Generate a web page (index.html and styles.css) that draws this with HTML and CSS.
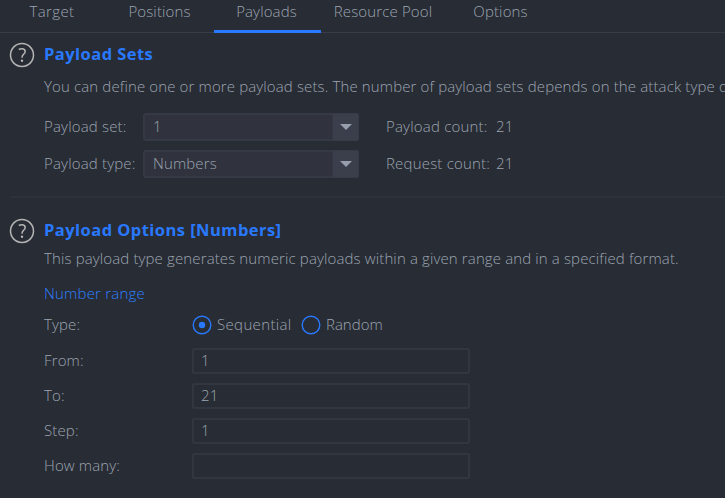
FILE: index.html
```html
<!DOCTYPE html>
<html lang="en">
<head>
<meta charset="utf-8">
<title>Intruder</title>
<link rel="stylesheet" href="styles.css">
</head>
<body>
<nav class="tabs">
  <span class="tab loose">Target</span>
  <span class="tab">Positions</span>
  <span class="tab active">Payloads</span>
  <span class="tab wide">Resource Pool</span>
  <span class="tab last">Options</span>
</nav>
<section class="panel sets">
  <svg class="help" viewBox="0 0 26 26"><circle cx="13" cy="13" r="11.5"/><path d="M9.8 7.5Q11.2 6.7 12.8 6.7Q16.2 6.7 16.2 9.5Q16.2 11.1 14.5 12.4Q13 13.6 13 15.7"/><circle class="dot" cx="13" cy="18.7" r="1.2"/></svg>
  <div class="body">
    <h2>Payload Sets</h2>
    <p class="desc">You can define one or more payload sets. The number of payload sets depends on the attack type defined in the Positions tab.</p>
    <div class="set-grid">
      <label>Payload set:</label>
      <div class="select"><span class="value">1</span><span class="arrow"><svg viewBox="0 0 12 6"><path d="M0 0H12L6 6Z"/></svg></span></div>
      <span class="count">Payload count:</span><span>21</span>
      <label>Payload type:</label>
      <div class="select"><span class="value">Numbers</span><span class="arrow"><svg viewBox="0 0 12 6"><path d="M0 0H12L6 6Z"/></svg></span></div>
      <span class="count">Request count:</span><span>21</span>
    </div>
  </div>
</section>
<hr>
<section class="panel options">
  <svg class="help" viewBox="0 0 26 26"><circle cx="13" cy="13" r="11.5"/><path d="M9.8 7.5Q11.2 6.7 12.8 6.7Q16.2 6.7 16.2 9.5Q16.2 11.1 14.5 12.4Q13 13.6 13 15.7"/><circle class="dot" cx="13" cy="18.7" r="1.2"/></svg>
  <div class="body">
    <h2>Payload Options [Numbers]</h2>
    <p class="desc">This payload type generates numeric payloads within a given range and in a specified format.</p>
    <h3>Number range</h3>
    <div class="row type"><label>Type:</label>
      <svg class="radio" viewBox="0 0 20 20"><circle cx="10" cy="10" r="8.8"/><circle class="dot" cx="10" cy="10" r="3.2"/></svg><span class="seq">Sequential</span>
      <svg class="radio" viewBox="0 0 20 20"><circle cx="10" cy="10" r="8.8"/></svg><span class="rand">Random</span>
    </div>
    <div class="row"><label>From:</label><div class="input">1</div></div>
    <div class="row"><label>To:</label><div class="input">21</div></div>
    <div class="row"><label>Step:</label><div class="input">1</div></div>
    <div class="row"><label>How many:</label><div class="input"></div></div>
  </div>
</section>
</body>
</html>
```
FILE: styles.css
```css
* { box-sizing: border-box; }
body {
  margin: 0;
  height: 498px;
  overflow: hidden;
  background: #282c34;
  color: #9ca4b2;
  font: 300 15px/20px "Open Sans", "Noto Sans", sans-serif;
  letter-spacing: 0.13px;
  white-space: nowrap;
}
h2, h3, p { margin: 0; font-size: 15px; line-height: 20px; }
h2 { font-size: 16.5px; font-weight: 700; color: #2979ff; letter-spacing: 0.45px; }
h3 { font-weight: 300; color: #2e80ff; letter-spacing: 0.2px; }
.tabs { display: flex; height: 33px; border-bottom: 1px solid #383c48; }
.tab { flex: none; width: 107px; height: 33px; padding: 1px 2px 0 0; text-align: center; border-bottom: 3px solid transparent; }
.tab.loose { padding-right: 3px; letter-spacing: 0.4px; }
.tab.wide { width: 125px; padding-right: 1px; }
.tab.last { padding: 1px 0 0 2px; }
.tab.active { border-color: #2979ff; }
.panel { display: flex; padding-left: 9px; }
.help { flex: none; width: 26px; height: 26px; margin-right: 9px; fill: none; stroke: #b5b5b5; stroke-width: 1.5; }
.help .dot { fill: #b5b5b5; stroke: none; }
.sets { padding-top: 9px; height: 163px; }
.body { flex: 1; min-width: 0; padding-top: 2px; }
.desc { overflow: hidden; }
.sets .desc { margin-top: 12px; }
.set-grid {
  display: grid;
  grid-template-columns: 99px 216px 137px 40px;
  grid-template-rows: 28px 28px;
  row-gap: 9px;
  margin-top: 17px;
  align-items: center;
}
.set-grid label, .set-grid > span { padding-bottom: 2px; letter-spacing: 0.18px; }
.set-grid .count { padding-left: 27px; letter-spacing: 0.2px; }
.select { display: flex; height: 28px; background: #30333d; border: 2px solid #353945; border-radius: 3px; }
.value { flex: 1; padding-left: 8px; line-height: 23px; }
.arrow { display: flex; align-items: center; justify-content: center; width: 23px; background: #3b3f4b; box-shadow: 0 0 0 1.5px #3b3f4b; }
.arrow svg { width: 12px; height: 6px; fill: #979eae; }
hr { margin: 0 0 0 10px; height: 2px; border: 0; background: #2d313a; }
.options { padding-top: 20px; }
.options .desc { margin-top: 8px; }
.options h3 { margin-top: 15px; }
.row { display: flex; align-items: center; height: 26px; margin-bottom: 9px; }
.row label { width: 148px; padding-bottom: 2px; }
.row.type { height: 20px; margin: 12px 0 13px; }
.radio { width: 20px; height: 20px; fill: none; stroke: #2979ff; stroke-width: 1.4; margin-right: 5px; }
.radio .dot { fill: #2979ff; stroke: none; }
.seq, .rand { padding-bottom: 2px; }
.seq { width: 84px; letter-spacing: 0.35px; }
.rand { letter-spacing: 0; }
.input { width: 278px; height: 26px; padding-left: 7px; border: 2px solid #323641; border-radius: 2px; line-height: 21px; }
```
